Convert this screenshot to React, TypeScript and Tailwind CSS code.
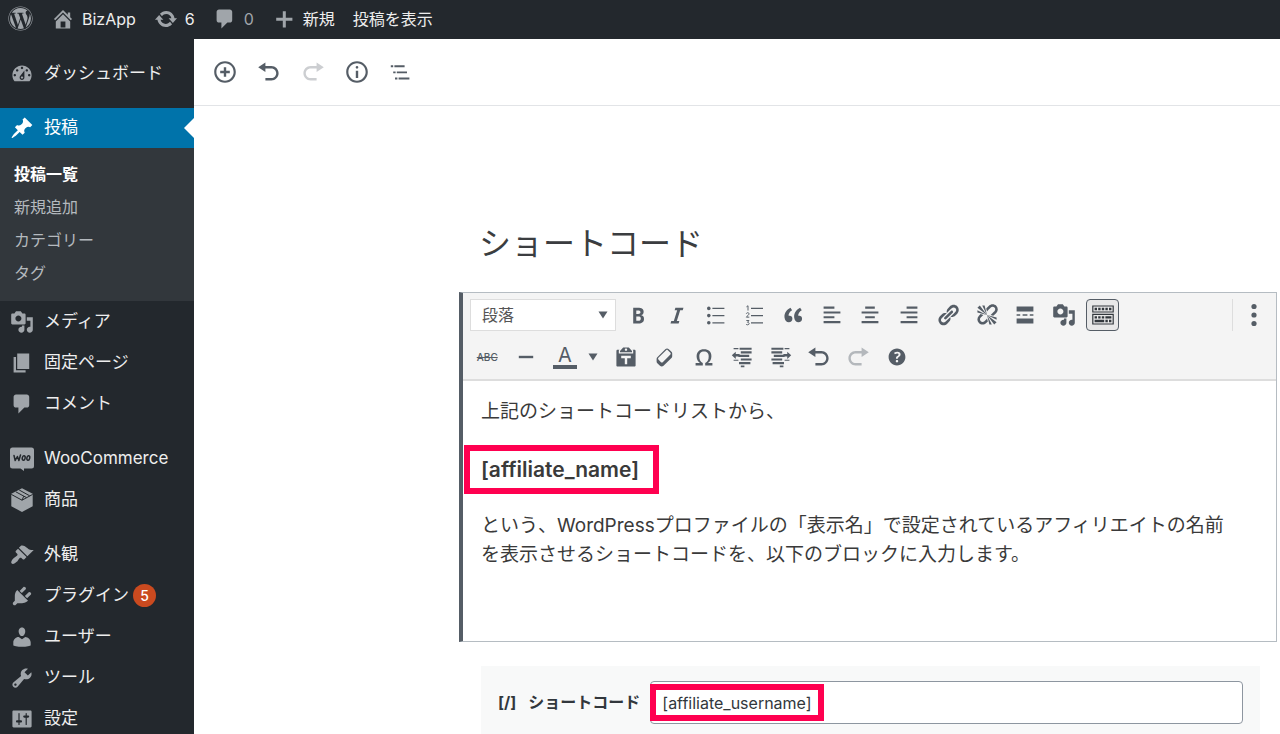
import React from "react";
import { FaWordpress } from "react-icons/fa";

const paths = {
  home: "M16 8.5l1.53 1.53-1.06 1.06L10 4.6l-6.47 6.49-1.06-1.06L10 2.5l4 4v-2h2v4zm-6-2.46l6 5.99V18H4v-5.97zM12 17v-5H8v5h4z",
  update:
    "M10.2 3.28c3.53 0 6.43 2.61 6.92 6h2.08l-3.5 4-3.5-4h2.32c-.45-1.97-2.21-3.45-4.32-3.45-1.45 0-2.73.71-3.54 1.78L4.95 5.66C6.23 4.2 8.11 3.28 10.2 3.28zm-.4 13.44c-3.52 0-6.43-2.61-6.92-6H.8l3.5-4c1.17 1.33 2.33 2.67 3.5 4H5.48c.45 1.97 2.21 3.45 4.32 3.45 1.45 0 2.73-.71 3.54-1.78l1.71 1.95c-1.28 1.46-3.15 2.38-5.25 2.38z",
  comment: "M5 2h9c1.1 0 2 .9 2 2v7c0 1.1-.9 2-2 2h-2l-5 5v-5H5c-1.1 0-2-.9-2-2V4c0-1.1.9-2 2-2z",
  plus: "M17 9v2.5h-5.5V17H9v-5.5H3.5V9H9V3.5h2.5V9z",
  dashboard:
    "M3.76 16h12.48c1.1-1.37 1.76-3.11 1.76-5 0-4.42-3.58-8-8-8s-8 3.58-8 8c0 1.89.66 3.63 1.76 5zM10 4c.55 0 1 .45 1 1s-.45 1-1 1-1-.45-1-1 .45-1 1-1zM6 6c.55 0 1 .45 1 1s-.45 1-1 1-1-.45-1-1 .45-1 1-1zm8 0c.55 0 1 .45 1 1s-.45 1-1 1-1-.45-1-1 .45-1 1-1zm-5.37 5.55L12 7v6c0 1.1-.9 2-2 2s-2-.9-2-2c0-.57.24-1.08.63-1.45zM4 10c.55 0 1 .45 1 1s-.45 1-1 1-1-.45-1-1 .45-1 1-1zm12 0c.55 0 1 .45 1 1s-.45 1-1 1-1-.45-1-1 .45-1 1-1zm-5 3c0-.55-.45-1-1-1s-1 .45-1 1 .45 1 1 1 1-.45 1-1z",
  post: "M10.44 3.02l1.82-1.82 6.36 6.35-1.83 1.82c-1.05-.68-2.48-.57-3.41.36l-.75.75c-.92.93-1.04 2.35-.35 3.41l-1.83 1.82-2.41-2.41-2.8 2.79c-.42.42-3.38 2.71-3.8 2.29s1.86-3.39 2.28-3.81l2.79-2.79L4.1 9.36l1.83-1.82c1.05.69 2.48.57 3.4-.36l.75-.75c.93-.92 1.05-2.35.36-3.41z",
  media:
    "M13 11V4c0-.55-.45-1-1-1h-1.67L9 1H5L3.67 3H2c-.55 0-1 .45-1 1v7c0 .55.45 1 1 1h10c.55 0 1-.45 1-1zM7 4.5c1.38 0 2.5 1.12 2.5 2.5S8.38 9.5 7 9.5 4.5 8.38 4.5 7 5.62 4.5 7 4.5zM14 6h5v10.5c0 1.38-1.12 2.5-2.5 2.5S14 17.88 14 16.5s1.12-2.5 2.5-2.5c.17 0 .34.02.5.05V9h-3V6zm-4 8.05V13h2v3.5c0 1.38-1.12 2.5-2.5 2.5S7 17.88 7 16.5 8.12 14 9.5 14c.17 0 .34.02.5.05z",
  page: "M6 15V2h10v13H6zm-1 1h8v2H3V5h2v11z",
  appearance:
    "M14.48 11.06L7.41 3.99l1.5-1.5c.5-.56 2.3-.47 3.51.32 1.21.8 1.43 1.28 2.91 2.1 1.18.64 2.45 1.26 4.45.85zm-.71.71L6.7 4.7 4.93 6.47c-.39.39-.39 1.02 0 1.41l1.06 1.06c.39.39.39 1.03 0 1.42-.6.6-1.43 1.11-2.21 1.69-.35.26-.7.53-1.01.84C1.43 14.23.4 16.08 1.4 17.07c.99 1 2.84-.03 4.18-1.36.31-.31.58-.66.85-1.02.57-.78 1.08-1.61 1.69-2.21.39-.39 1.02-.39 1.41 0l1.06 1.06c.39.39 1.02.39 1.41 0z",
  plugins:
    "M13.11 4.36L9.87 7.6 8 5.73l3.24-3.24c.35-.34 1.05-.2 1.56.32.52.51.66 1.21.31 1.55zm-8 1.77l.91-1.12 9.01 9.01-1.19.84c-.71.71-2.63 1.16-3.82 1.16H6.14L4.9 17.26c-.59.59-1.54.59-2.12 0-.59-.58-.59-1.53 0-2.12l1.24-1.24v-3.88c0-1.13.4-3.19 1.09-3.89zm7.26 3.97l3.24-3.24c.34-.35 1.04-.21 1.55.31.52.51.66 1.21.31 1.55l-3.24 3.25z",
  users:
    "M10 9.25c-2.27 0-2.73-3.44-2.73-3.44C7 4.02 7.82 2 9.97 2c2.16 0 2.98 2.02 2.71 3.81 0 0-.41 3.44-2.68 3.44zm0 2.57L12.72 10c2.39 0 4.52 2.33 4.52 4.53v2.49s-3.65 1.13-7.24 1.13c-3.65 0-7.24-1.13-7.24-1.13v-2.49c0-2.25 1.94-4.48 4.47-4.48z",
  tools:
    "M16.68 9.77c-1.34 1.34-3.3 1.67-4.95.99l-5.41 6.52c-.99.99-2.59.99-3.58 0s-.99-2.59 0-3.57l6.52-5.42c-.68-1.65-.35-3.61.99-4.95 1.28-1.28 3.12-1.62 4.72-1.06l-2.89 2.89 2.82 2.82 2.86-2.87c.53 1.58.18 3.39-1.08 4.65zM3.81 16.21c.4.39 1.04.39 1.43 0 .4-.4.4-1.04 0-1.43-.39-.4-1.03-.4-1.43 0-.39.39-.39 1.03 0 1.43z",
  settings:
    "M18 16V4c0-.55-.45-1-1-1H3c-.55 0-1 .45-1 1v12c0 .55.45 1 1 1h14c.55 0 1-.45 1-1zM8 11h1c.55 0 1 .45 1 1s-.45 1-1 1H8v1.5c0 .28-.22.5-.5.5s-.5-.22-.5-.5V13H6c-.55 0-1-.45-1-1s.45-1 1-1h1V5.5c0-.28.22-.5.5-.5s.5.22.5.5V11zm5-2h-1c-.55 0-1-.45-1-1s.45-1 1-1h1V5.5c0-.28.22-.5.5-.5s.5.22.5.5V7h1c.55 0 1 .45 1 1s-.45 1-1 1h-1v5.5c0 .28-.22.5-.5.5s-.5-.22-.5-.5V9z",
  insert:
    "M10 1c-5 0-9 4-9 9s4 9 9 9 9-4 9-9-4-9-9-9zm0 16.2c-4 0-7.2-3.2-7.2-7.2S6 2.8 10 2.8s7.2 3.2 7.2 7.2-3.2 7.2-7.2 7.2zM11 6H9v3H6v2h3v3h2v-3h3V9h-3z",
  undo: "M12 5H7V2L1 6l6 4V7h5c2.2 0 4 1.8 4 4s-1.8 4-4 4H7v2h5c3.3 0 6-2.7 6-6s-2.7-6-6-6z",
  redo: "M8 5h5V2l6 4-6 4V7H8c-2.2 0-4 1.8-4 4s1.8 4 4 4h5v2H8c-3.3 0-6-2.7-6-6s2.7-6 6-6z",
  info: "M9 15h2V9H9v6zm1-10c-.6 0-1.1.5-1.1 1.1s.5 1.1 1.1 1.1 1.1-.5 1.1-1.1S10.6 5 10 5zm0-4c-5 0-9 4-9 9s4 9 9 9 9-4 9-9-4-9-9-9zm0 16.2c-4 0-7.2-3.2-7.2-7.2S6 2.8 10 2.8s7.2 3.2 7.2 7.2-3.2 7.2-7.2 7.2z",
  outline: "M1.500 4.400h2V6h-2zM4.500 4.400H13V6H4.500zM3.500 9.500h2v1.600h-2zM6.500 9.500H15v1.600H6.500zM5 14.600h2v1.600H5zM8 14.600h9v1.600H8z",
  bold: "M6 4v13h4.54c1.37 0 2.46-.33 3.26-1 .8-.66 1.2-1.58 1.2-2.77 0-.84-.17-1.51-.51-2.01s-.9-.85-1.67-1.03v-.09c.57-.1 1.02-.4 1.36-.9s.51-1.13.51-1.91c0-1.14-.39-1.98-1.17-2.5C12.75 4.26 11.5 4 9.78 4H6zm2.57 5.15V6.26h1.36c.73 0 1.27.11 1.61.32.34.22.51.58.51 1.07 0 .54-.16.92-.47 1.15s-.82.35-1.51.35h-1.5zm0 2.19h1.6c1.44 0 2.16.53 2.16 1.61 0 .6-.17 1.05-.51 1.34s-.86.43-1.57.43H8.57v-3.38z",
  italic: "M14.78 6h-2.13l-2.8 9h2.12l-.62 2H4.6l.62-2h2.14l2.8-9H8.03l.62-2h6.75z",
  quote:
    "M9.49 13.22c0-.74-.2-1.38-.61-1.9-.62-.78-1.83-.88-2.53-.72-.29-1.65 1.11-3.75 2.92-4.65L7.88 4c-2.73 1.3-5.42 4.28-4.96 8.05C3.21 14.43 4.59 16 6.54 16c.85 0 1.56-.25 2.12-.75s.83-1.18.83-2.03zm8.05 0c0-.74-.2-1.38-.61-1.9-.63-.78-1.83-.88-2.53-.72-.29-1.65 1.11-3.75 2.92-4.65L15.93 4c-2.73 1.3-5.41 4.28-4.95 8.05.29 2.38 1.66 3.95 3.61 3.95.85 0 1.56-.25 2.12-.75s.83-1.18.83-2.03z",
  alignLeft: "M12 4.800V3H3v1.800h9zm5 4V7H3v1.800h14zm-5 4V11H3v1.800h9zm5 4V15H3v1.800h14z",
  alignCenter: "M14 4.800V3H6v1.800h8zm3 4V7H3v1.800h14zm-3 4V11H6v1.800h8zm3 4V15H3v1.800h14z",
  alignRight: "M17 4.800V3H8v1.800h9zm0 4V7H3v1.800h14zm0 4V11H8v1.800h9zm0 4V15H3v1.800h14z",
  link: "M17.74 2.76c1.68 1.69 1.68 4.41 0 6.1l-1.53 1.52c-1.12 1.12-2.7 1.47-4.14 1.09l2.62-2.61.76-.77.76-.76c.84-.84.84-2.2 0-3.04-.84-.85-2.2-.85-3.04 0l-.77.76-3.38 3.38c-.37-1.44-.02-3.02 1.1-4.14l1.52-1.53c1.69-1.68 4.42-1.68 6.1 0zM8.59 13.43l5.34-5.34c.42-.42.42-1.1 0-1.52-.44-.43-1.13-.39-1.53 0l-5.33 5.34c-.42.42-.42 1.1 0 1.52.44.43 1.13.39 1.52 0zm-.76 2.29l4.14-4.15c.38 1.44.03 3.02-1.09 4.14l-1.52 1.53c-1.69 1.68-4.41 1.68-6.1 0-1.68-1.68-1.68-4.42 0-6.1l1.53-1.52c1.12-1.12 2.7-1.47 4.14-1.1l-4.14 4.15c-.85.84-.85 2.2 0 3.05.84.84 2.2.84 3.04 0z",
  unlink:
    "M17.74 2.26c1.68 1.69 1.68 4.41 0 6.1l-1.53 1.52c-.32.33-.69.58-1.08.77L13 10l1.69-1.64.76-.77.76-.76c.84-.84.84-2.2 0-3.04-.84-.85-2.2-.85-3.04 0l-.77.76-.76.76L10 7l-.65-2.14c.19-.38.44-.75.77-1.07l1.52-1.53c1.69-1.68 4.42-1.68 6.1 0zM2 4l8 6-6-8zm4-2l4 8-2-8H6zM2 6l8 4-8-2V6zm7.36 7.69L10 13l.74 2.35-1.38 1.39c-1.69 1.68-4.41 1.68-6.1 0-1.68-1.68-1.68-4.42 0-6.1l1.39-1.38L7 10l-.69.64-1.52 1.53c-.85.84-.85 2.2 0 3.04.84.85 2.2.85 3.04 0zM18 16l-8-6 6 8zm-4 2l-4-8 2 8h2zm4-4l-8-4 8 2v2z",
  more: "M17 7V3H3v4h14zM6 10.700V9.300H3v1.400h3zm6 0V9.300H8v1.400h4zm5 0V9.300h-3v1.400h3zM17 17v-4H3v4h14z",
  kitchen:
    "M19 2v6H1V2h18zm-1 5V3H2v4h16zM5 4v2H3V4h2zm3 0v2H6V4h2zm3 0v2H9V4h2zm3 0v2h-2V4h2zm3 0v2h-2V4h2zm2 5v9H1V9h18zm-1 8v-7H2v7h16zM5 11v2H3v-2h2zm3 0v2H6v-2h2zm3 0v2H9v-2h2zm6 0v2h-5v-2h5zm-6 3v2H3v-2h8zm3 0v2h-2v-2h2zm3 0v2h-2v-2h2z",
  rule: "M4 9h12v2H4z",
  paste:
    "M12.38 2L15 5v1H5V5l2.64-3h4.74zM10 5c.55 0 1-.44 1-1 0-.55-.45-1-1-1s-1 .45-1 1c0 .56.45 1 1 1zm5.45-1H17c.55 0 1 .45 1 1v12c0 .56-.45 1-1 1H3c-.55 0-1-.44-1-1V5c0-.55.45-1 1-1h1.55L4 4.63V7h12V4.63zM14 11V9H6v2h3v5h2v-5h3z",
  eraser:
    "M14.29 4.59l1.1 1.11c.41.4.61.94.61 1.47v2.12c0 .53-.2 1.07-.61 1.47l-6.63 6.63c-.4.41-.94.61-1.47.61s-1.07-.2-1.47-.61l-1.11-1.1-1.1-1.11c-.41-.4-.61-.94-.61-1.47v-2.12c0-.54.2-1.07.61-1.48l6.63-6.62c.4-.41.94-.61 1.47-.61s1.06.2 1.47.61zm-6.21 9.7l6.42-6.42c.39-.39.39-1.03 0-1.43L12.36 4.3c-.19-.19-.45-.29-.72-.29s-.52.1-.71.29l-6.42 6.42c-.39.4-.39 1.04 0 1.43l2.14 2.14c.38.38 1.04.38 1.43 0z",
  omega:
    "M10 5.4c1.27 0 2.24.36 2.91 1.08.66.71 1 1.76 1 3.13 0 1.28-.23 2.37-.69 3.27-.47.89-1.27 1.52-2.22 2.12v2h6v-2h-3.69c.92-.64 1.62-1.34 2.12-2.34.49-1.01.74-2.13.74-3.35 0-1.78-.55-3.19-1.65-4.22S11.92 3.54 10 3.54s-3.43.53-4.52 1.57c-1.1 1.04-1.65 2.44-1.65 4.2 0 1.21.24 2.31.73 3.33.48 1.01 1.19 1.71 2.1 2.36H3v2h6v-2c-.98-.64-1.8-1.28-2.24-2.17-.45-.89-.67-1.96-.67-3.22 0-1.37.33-2.41 1-3.13C7.75 5.76 8.72 5.4 10 5.4z",
  outdent:
    "M3 2.600h4v1H3zM8 2.200h10v1.800H8zM9 5.200h9V7H9zM7 8.200h9V10H7zM9 11.200h9V13H9zM3 12.200h4v1H3zM7.500 14.200H17V16H7.500zM9 17h3v1.500H9zM1.500 8.600L4.800 5.600v2H8v2H4.800v2z",
  indent:
    "M17 2.600h-4v1h4zM12 2.200H2V4h10zM11 5.200H2V7h9zM13 8.200H4V10h9zM11 11.200H2V13h9zM17 12.200h-4v1h4zM12.500 14.200H3V16h9.500zM12 17H9v1.500h3zM18.500 8.600L15.200 5.600v2H12v2h3.200v2z",
  help: "M17 10c0-3.87-3.14-7-7-7-3.87 0-7 3.13-7 7s3.13 7 7 7c3.86 0 7-3.13 7-7zm-6.3 1.48H9.14v-.43c0-.38.08-.7.24-.98s.46-.57.88-.89c.41-.29.68-.53.81-.71.14-.18.2-.39.2-.62 0-.25-.09-.44-.28-.58-.19-.13-.45-.19-.79-.19-.58 0-1.25.19-2 .57l-.64-1.28c.87-.49 1.8-.74 2.77-.74.81 0 1.45.2 1.92.58.48.39.71.91.71 1.55 0 .43-.09.8-.29 1.11-.19.32-.57.67-1.11 1.06-.38.28-.61.49-.71.63-.1.15-.15.34-.15.57v.35zm-1.47 2.74c-.18-.17-.27-.42-.27-.73 0-.33.08-.58.26-.75s.43-.25.77-.25c.32 0 .57.09.75.26s.27.42.27.74c0 .3-.09.55-.27.72-.18.18-.43.27-.75.27-.33 0-.58-.09-.76-.26z",
};

type IconName = keyof typeof paths;

function Icon({ name, className = "size-6" }: { name: IconName; className?: string }) {
  return (
    <svg viewBox="0 0 20 20" fill="currentColor" fillRule={name === "outdent" || name === "indent" ? "nonzero" : "evenodd"} aria-hidden="true" className={`shrink-0 ${className}`}>
      <path d={paths[name]} />
    </svg>
  );
}

function BulletList() {
  return (
    <svg viewBox="0 0 20 20" fill="currentColor" aria-hidden="true" className="size-6">
      <circle cx="4" cy="4.5" r="1.5" />
      <circle cx="4" cy="10.5" r="1.5" />
      <circle cx="4" cy="16.5" r="1.5" />
      <path d="M7 4h10v1H7zM7 10h10v1H7zM7 16h10v1H7z" />
    </svg>
  );
}

function NumberList() {
  return (
    <svg viewBox="0 0 20 20" fill="currentColor" aria-hidden="true" className="size-6">
      <path fill="none" stroke="currentColor" strokeWidth="0.8" d="M3.700 3.200l1.300-.9v4M3.600 8.900c.3-1.200 2.500-1.100 2.200.3-.2.900-1.400 1.500-2.200 2.600h2.500M3.600 14.600h2.200l-1.200 1.500c1.800 0 1.700 2.100.1 2.100-.5 0-.9-.1-1.200-.3" />
      <path d="M7.500 4h10v1h-10zM7.500 10h10v1h-10zM7.500 16h10v1h-10z" />
    </svg>
  );
}

function WooIcon() {
  return (
    <svg viewBox="0 0 24 24" aria-hidden="true" className="size-6 shrink-0">
      <path fill="currentColor" d="M2.500 0.500h19A2.500 2.500 0 0 1 24 3v16a2.500 2.500 0 0 1-2.500 2.500H14V24l-3.500-2.500h-8A2.500 2.500 0 0 1 0 19V3A2.500 2.500 0 0 1 2.500 0.500z" />
      <g fill="none" stroke="#23282d" strokeWidth="1.500" strokeLinecap="round" strokeLinejoin="round">
        <path d="M4 8.500l1.200 5 2.200-4 1.500 4 1.600-5.500" />
        <ellipse cx="13.700" cy="11" rx="1.400" ry="2.300" transform="rotate(12 13.700 11)" />
        <ellipse cx="18.300" cy="11" rx="1.400" ry="2.300" transform="rotate(12 18.300 11)" />
      </g>
    </svg>
  );
}

function BoxIcon() {
  return (
    <svg viewBox="0 0 24 24" aria-hidden="true" className="size-6 shrink-0">
      <path fill="currentColor" d="M12 0.300l10.700 5.500v12.400L12 24 1.300 18.200V5.800z" />
      <path fill="none" stroke="#23282d" strokeWidth="1" d="M1.300 6.400l10.700 5.800 10.700-5.800M5.800 3.800l10.700 5.800M9.200 2l10.500 5.800M12 12.200l1.800-4" />
    </svg>
  );
}

function MenuItem({ icon, label, badge }: { icon: React.ReactNode; label: string; badge?: string }) {
  return (
    <li>
      <a href="#" className="flex h-[41px] items-center px-2.5 text-[17px] text-[#eee]">
        <span className="flex w-6 shrink-0 justify-center text-[#a0a5aa]">{icon}</span>
        <span className="ml-2.5 whitespace-nowrap">{label}</span>
        {badge && (
          <span className="ml-1 flex size-[23px] items-center justify-center rounded-full bg-[#ca4a1f] text-sm font-medium text-white">
            {badge}
          </span>
        )}
      </a>
    </li>
  );
}

function Tool({ label, children, className = "" }: { label: string; children: React.ReactNode; className?: string }) {
  return (
    <button type="button" aria-label={label} className={`flex h-8 items-center justify-center ${className}`}>
      {children}
    </button>
  );
}

function Caret() {
  return (
    <svg viewBox="0 0 10 8" fill="currentColor" aria-hidden="true" className="h-2 w-2.5">
      <path d="M0.500 0.500h9L5 7.500z" />
    </svg>
  );
}

function AdminBar() {
  return (
    <header className="flex h-[39px] shrink-0 items-center bg-[#23282d] px-2 pb-0.5 text-base text-[#eee]">
      <a href="#" aria-label="WordPress" className="text-[#a0a5aa]">
        <FaWordpress className="size-[25px]" />
      </a>
      <a href="#" className="ml-[18px] flex items-center gap-[7px]">
        <Icon name="home" className="size-6 text-[#a0a5aa]" />
        BizApp
      </a>
      <a href="#" aria-label="更新 6" className="ml-[18px] flex items-center gap-[7px]">
        <Icon name="update" className="size-6 text-[#a0a5aa]" />6
      </a>
      <a href="#" aria-label="コメント 0" className="ml-[18px] flex items-center gap-[7px] text-[#a0a5aa]">
        <Icon name="comment" />0
      </a>
      <a href="#" className="ml-[18px] flex items-center gap-[7px]">
        <Icon name="plus" className="size-6 text-[#a0a5aa]" />
        新規
      </a>
      <a href="#" className="ml-[18px]">投稿を表示</a>
    </header>
  );
}

function Sidebar() {
  return (
    <nav aria-label="メインメニュー" className="w-[194px] shrink-0 overflow-hidden bg-[#23282d] pt-[14px]">
      <ul>
        <MenuItem icon={<Icon name="dashboard" />} label="ダッシュボード" />
      </ul>
      <ul className="mt-[14px]">
        <li>
          <a href="#" className="relative flex h-10 items-center bg-[#0073aa] px-2.5 text-[17px] text-white">
            <Icon name="post" />
            <span className="ml-2.5">投稿</span>
            <svg viewBox="0 0 10 20" aria-hidden="true" className="absolute right-0 top-2.5 h-5 w-2.5">
              <path d="M10 0v20L0 10z" fill="#fff" />
            </svg>
          </a>
          <ul className="bg-[#32373c] pt-[9px] pb-3 text-base text-[#b4b9be]">
            <li><a href="#" className="flex h-[33px] items-center px-3.5 font-bold text-white">投稿一覧</a></li>
            <li><a href="#" className="flex h-[33px] items-center px-3.5">新規追加</a></li>
            <li><a href="#" className="flex h-[33px] items-center px-3.5">カテゴリー</a></li>
            <li><a href="#" className="flex h-[33px] items-center px-3.5">タグ</a></li>
          </ul>
        </li>
        <MenuItem icon={<Icon name="media" />} label="メディア" />
        <MenuItem icon={<Icon name="page" />} label="固定ページ" />
        <MenuItem icon={<Icon name="comment" />} label="コメント" />
      </ul>
      <ul className="mt-[14px]">
        <MenuItem icon={<WooIcon />} label="WooCommerce" />
        <MenuItem icon={<BoxIcon />} label="商品" />
      </ul>
      <ul className="mt-[14px]">
        <MenuItem icon={<Icon name="appearance" />} label="外観" />
        <MenuItem icon={<Icon name="plugins" />} label="プラグイン" badge="5" />
        <MenuItem icon={<Icon name="users" />} label="ユーザー" />
        <MenuItem icon={<Icon name="tools" />} label="ツール" />
        <MenuItem icon={<Icon name="settings" />} label="設定" />
      </ul>
    </nav>
  );
}

function ClassicToolbar() {
  return (
    <div className="flex h-[88px] flex-col gap-2.5 border-b-2 border-[#ddd] bg-[#f4f4f4] pl-[7px] pr-2.5 pt-1.5 text-[#555d66]">
      <div className="flex items-center">
        <div className="relative mr-[3px] shrink-0">
          <select aria-label="段落スタイル" className="block h-8 w-[146px] appearance-none border border-[#ddd] bg-white pl-[11px] text-base leading-none text-[#555]">
            <option>段落</option>
          </select>
          <span className="pointer-events-none absolute right-2 top-3">
            <Caret />
          </span>
        </div>
        <div className="grid w-[503px] shrink-0 grid-cols-13">
          <Tool label="太字"><Icon name="bold" /></Tool>
          <Tool label="イタリック"><Icon name="italic" /></Tool>
          <Tool label="番号なしリスト"><BulletList /></Tool>
          <Tool label="番号付きリスト"><NumberList /></Tool>
          <Tool label="引用"><Icon name="quote" /></Tool>
          <Tool label="左寄せ"><Icon name="alignLeft" /></Tool>
          <Tool label="中央揃え"><Icon name="alignCenter" /></Tool>
          <Tool label="右寄せ"><Icon name="alignRight" /></Tool>
          <Tool label="リンクの挿入"><Icon name="link" /></Tool>
          <Tool label="リンクの削除"><Icon name="unlink" /></Tool>
          <Tool label="続きを読む"><Icon name="more" /></Tool>
          <Tool label="メディアを追加"><Icon name="media" /></Tool>
          <Tool label="ツールバー切り替え" className="mx-[3px] rounded-sm border border-[#555d66] bg-[#e8e8e8] text-[#32373c]">
            <Icon name="kitchen" />
          </Tool>
        </div>
        <div className="ml-auto flex border-l border-[#ddd] pl-[9px]">
          <Tool label="詳細設定">
            <svg viewBox="0 0 24 24" fill="currentColor" aria-hidden="true" className="size-6">
              <circle cx="12" cy="3.500" r="2.600" />
              <circle cx="12" cy="12" r="2.600" />
              <circle cx="12" cy="20.500" r="2.600" />
            </svg>
          </Tool>
        </div>
      </div>
      <div className="-ml-0.5 flex items-center">
        <div className="grid w-[77px] grid-cols-2">
          <Tool label="打ち消し" className="text-[10px] font-medium line-through">ABC</Tool>
          <Tool label="横ライン"><Icon name="rule" /></Tool>
        </div>
        <div className="flex w-[62px]">
          <Tool label="テキスト色" className="w-10">
            <span className="flex h-6 w-6 items-center justify-center border-b-4 border-[#555d66] text-xl leading-5">A</span>
          </Tool>
          <Tool label="色を選択" className="w-4"><Caret /></Tool>
        </div>
        <div className="grid w-[309px] grid-cols-8">
          <Tool label="テキストとしてペースト"><Icon name="paste" /></Tool>
          <Tool label="書式設定をクリア"><Icon name="eraser" /></Tool>
          <Tool label="特殊文字"><Icon name="omega" /></Tool>
          <Tool label="インデントを減らす"><Icon name="outdent" /></Tool>
          <Tool label="インデントを増やす"><Icon name="indent" /></Tool>
          <Tool label="取り消し"><Icon name="undo" /></Tool>
          <Tool label="やり直し" className="text-[#b4b8bc]"><Icon name="redo" /></Tool>
          <Tool label="キーボードショートカット"><Icon name="help" /></Tool>
        </div>
      </div>
    </div>
  );
}

function Editor() {
  return (
    <main className="flex min-w-0 flex-1 flex-col bg-white">
      <div className="flex h-[67px] shrink-0 items-center gap-5 border-b border-[#e2e4e7] px-[19px] text-[#555d66]">
        <Tool label="ブロックの追加"><Icon name="insert" /></Tool>
        <Tool label="元に戻す"><Icon name="undo" /></Tool>
        <Tool label="やり直す" className="text-[#ccced1]"><Icon name="redo" /></Tool>
        <Tool label="コンテンツ構造"><Icon name="info" /></Tool>
        <Tool label="ブロックナビゲーション"><Icon name="outline" /></Tool>
      </div>
      <div className="flex flex-1 flex-col pl-[265px] pr-[3px] pt-[114px] text-[#3b3d40]">
        <input aria-label="タイトル" defaultValue="ショートコード" className="mb-6 ml-5 h-12 bg-transparent text-[32px] outline-none" />
        <section className="h-[350px] shrink-0 border border-l-4 border-[#b5bcc2] border-l-[#555d66]">
          <ClassicToolbar />
          <div className="pl-[18px] pr-9 pt-4 text-[19px] leading-[29px] text-[#3a3a3a]">
            <p>上記のショートコードリストから、</p>
            <p className="mt-[29px] text-[21px]">
              <strong className="relative inline-block font-semibold">
                [affiliate_name]
                <span aria-hidden="true" className="absolute -bottom-2.5 -left-[17px] -right-5 -top-2.5 border-[6px] border-[#ff0050]" />
              </strong>
            </p>
            <p className="mt-[27px]">
              という、WordPressプロファイルの「表示名」で設定されているアフィリエイトの名前を表示させるショートコードを、以下のブロックに入力します。
            </p>
          </div>
        </section>
        <section className="ml-[22px] mr-[17px] mt-6 flex flex-1 items-start bg-[#f8f9f9] px-[17px] pt-[15px]">
          <label htmlFor="shortcode" className="flex h-[42px] items-center gap-3 whitespace-nowrap text-base font-bold text-[#32373c]">
            <span>[/]</span>
            <span>ショートコード</span>
          </label>
          <div className="relative ml-2.5 flex-1">
            <input
              id="shortcode"
              defaultValue="[affiliate_username]"
              className="h-[43px] w-full rounded border border-[#8d96a0] bg-white px-[11px] text-base text-[#32373c] outline-none"
            />
            <span aria-hidden="true" className="absolute left-0 top-[3px] h-[37px] w-[174px] border-[6px] border-[#ff0050]" />
          </div>
        </section>
      </div>
    </main>
  );
}

export default function App() {
  return (
    <div className="flex h-screen flex-col overflow-hidden bg-white font-[Inter,'Noto_Sans_CJK_JP',sans-serif]">
      <AdminBar />
      <div className="flex min-h-0 flex-1">
        <Sidebar />
        <Editor />
      </div>
    </div>
  );
}
